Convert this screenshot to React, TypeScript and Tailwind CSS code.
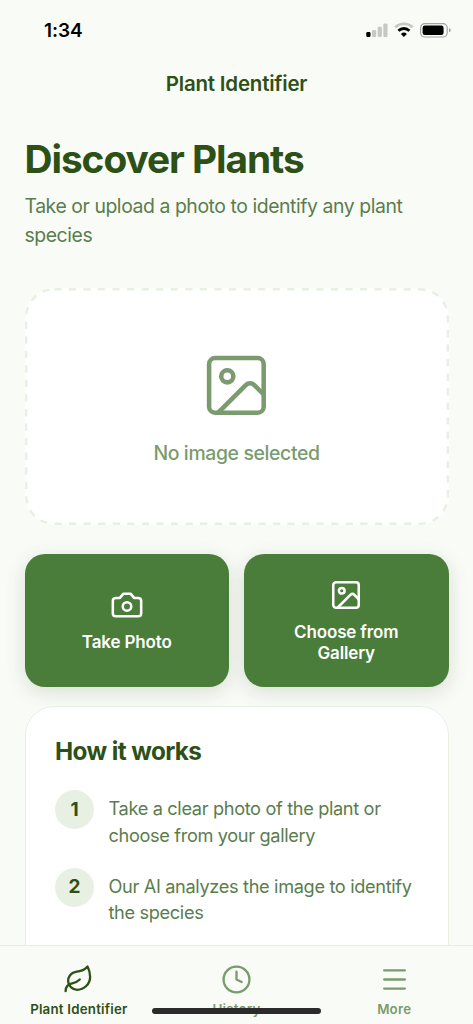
import type { ReactNode } from "react";
import { Clock, Image, Leaf, Menu } from "lucide-react";

const steps = [
  ["Take a clear photo of the plant or", "choose from your gallery"],
  ["Our AI analyzes the image to identify", "the species"],
];

function CameraIcon() {
  return (
    <svg width="34" height="34" viewBox="0 0 24 24" fill="none" stroke="currentColor" strokeWidth="1.8" strokeLinecap="round" strokeLinejoin="round">
      <path d="M14.5 4h-5L7 7H4a2 2 0 0 0-2 2v9a2 2 0 0 0 2 2h16a2 2 0 0 0 2-2V9a2 2 0 0 0-2-2h-3l-2.5-3z" />
      <circle cx="12" cy="13" r="3" />
    </svg>
  );
}

function StatusBar() {
  return (
    <div className="flex h-[61px] items-center justify-between pr-[22px] pl-[44px] text-black">
      <span className="text-[19px] leading-6 font-semibold tracking-[-0.1px]">1:34</span>
      <svg className="mb-0.5" width="85" height="18" viewBox="0 0 85 18" fill="none">
        <rect x="0.3" y="11" width="4.2" height="5" rx="1.2" fill="#000" />
        <rect x="6" y="9" width="4.2" height="7" rx="1.2" fill="#c6c8c4" />
        <rect x="11.7" y="5.7" width="4.2" height="10.3" rx="1.2" fill="#c6c8c4" />
        <rect x="17.3" y="2.4" width="4.2" height="13.6" rx="1.2" fill="#c6c8c4" />
        <path d="M29.3 6.2a12.6 12.6 0 0 1 17.2 0" stroke="#c6c8c4" strokeWidth="2.6" />
        <path d="M32.4 9.7a8 8 0 0 1 11 0" stroke="#000" strokeWidth="2.8" />
        <path d="M34.9 12.9a4.6 4.6 0 0 1 6 0L37.9 16z" fill="#000" />
        <rect x="54.6" y="2.6" width="26.6" height="13.4" rx="4.2" stroke="#a2a4a0" strokeWidth="1.2" />
        <rect x="56.6" y="4.5" width="21" height="9.6" rx="2.4" fill="#000" />
        <path d="M83 7.3c1.2.4 1.7 1.1 1.7 2s-.5 1.6-1.7 2z" fill="#a2a4a0" />
      </svg>
    </div>
  );
}

function ActionButton({ icon, children }: { icon: ReactNode; children: ReactNode }) {
  return (
    <button className="flex h-[133px] flex-1 flex-col items-center justify-center gap-[10px] rounded-[20px] bg-[#4a7c3a] text-center text-[17px] leading-[20.5px] font-semibold tracking-[-0.15px] text-white shadow-[0_5px_20px_rgba(45,80,22,0.16)]">
      {icon}
      <span>{children}</span>
    </button>
  );
}

function Tab({ icon, label, active }: { icon: ReactNode; label: string; active?: boolean }) {
  return (
    <div className={`flex flex-1 flex-col items-center pt-[18px] ${active ? "text-[#2d5016]" : "text-[#7a9b6e]"}`}>
      <div className="flex h-[31px] items-center">{icon}</div>
      <span className="mt-[6px] text-[13.3px] leading-4 font-semibold tracking-[0.22px]">{label}</span>
    </div>
  );
}

export default function App() {
  return (
    <div className="relative flex h-[1024px] w-[473px] flex-col overflow-hidden bg-[#f9fbf7] font-['Inter',sans-serif] whitespace-nowrap">
      <StatusBar />
      <header className="flex h-[47px] items-center justify-center pb-0.5">
        <h1 className="text-[20.5px] leading-6 font-semibold tracking-[-0.2px] text-[#2d5016]">Plant Identifier</h1>
      </header>

      <main className="flex min-h-0 flex-1 flex-col overflow-hidden px-[24.5px] pt-[27px]">
        <h2 className="text-[38.8px] leading-[47px] font-bold tracking-[-1.05px] text-[#2d5016]">Discover Plants</h2>
        <p className="mt-[10px] text-[19.4px] leading-[29px] tracking-[-0.43px] text-[#5a7d4e]">
          Take or upload a photo to identify any plant
          <br />
          species
        </p>

        <div className="relative mt-[38px] flex h-[237px] shrink-0 flex-col items-center rounded-[29px] bg-white pt-[61px] text-[#7a9b6e]">
          <svg className="absolute inset-0" width="424" height="237" fill="none">
            <rect x="1.2" y="1.2" width="421.6" height="234.6" rx="28" stroke="#e8f0e4" strokeWidth="2.4" strokeDasharray="7.28 7.28" />
          </svg>
          <Image size={72.8} strokeWidth={1.5} />
          <p className="mt-[17px] text-[19.4px] leading-[29px] font-medium tracking-[-0.36px]">No image selected</p>
        </div>

        <div className="mt-[29px] flex shrink-0 gap-[15px]">
          <ActionButton icon={<CameraIcon />}>Take Photo</ActionButton>
          <ActionButton icon={<Image size={34} strokeWidth={1.8} />}>
            Choose from
            <br />
            Gallery
          </ActionButton>
        </div>

        <section className="mt-[19px] h-[340px] shrink-0 rounded-[29px] border-[1.2px] border-[#e8f0e4] bg-white px-[29.5px] pt-[29px]">
          <h3 className="text-[24.3px] leading-[30px] font-bold tracking-[-0.6px] text-[#2d5016]">How it works</h3>
          <ol className="mt-[22px] flex flex-col gap-[17.3px]">
            {steps.map((lines, i) => (
              <li key={i} className="flex">
                <span className="mt-0.5 flex size-[39px] shrink-0 items-center justify-center rounded-full bg-[#e8f0e4] pt-px text-[19px] font-bold text-[#2d5016]">
                  {i + 1}
                </span>
                <p className="ml-[14.5px] pt-[7px] text-[18.2px] leading-[26.7px] tracking-[-0.35px] text-[#5a7d4e]">
                  {lines[0]}
                  <br />
                  {lines[1]}
                </p>
              </li>
            ))}
          </ol>
        </section>
      </main>

      <nav className="flex h-[79px] shrink-0 border-t border-[#e5efe1] bg-[#f9fbf7]">
        <Tab icon={<Leaf size={31} strokeWidth={1.8} />} label="Plant Identifier" active />
        <Tab icon={<Clock size={31} strokeWidth={1.8} />} label="History" />
        <Tab icon={<Menu size={31} strokeWidth={1.8} />} label="More" />
      </nav>
      <div className="absolute bottom-[10px] left-[152px] h-[6px] w-[169px] rounded-full bg-[#2b2b2b]" />
    </div>
  );
}
